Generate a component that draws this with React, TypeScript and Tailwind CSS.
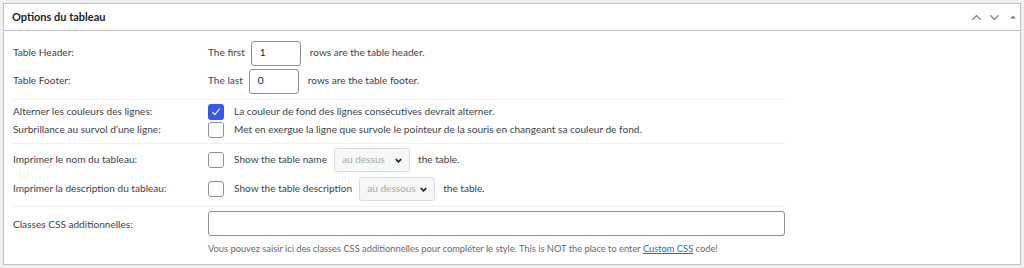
import { ChevronUp, ChevronDown } from 'lucide-react';

const font = { fontFamily: 'Lato, "Liberation Sans", sans-serif' };

function Checkbox({ checked }: { checked?: boolean }) {
  return (
    <span
      className={
        checked
          ? 'flex h-[16px] w-[16px] shrink-0 items-center justify-center rounded-[3px] bg-[#3858e9]'
          : 'flex h-[16px] w-[16px] shrink-0 items-center justify-center rounded-[3px] border border-[#8c8f94] bg-white'
      }
    >
      {checked && (
        <svg viewBox="0 0 16 16" className="h-[12px] w-[12px]">
          <path d="M3.5 8.5 L6.5 11.5 L12.5 4" fill="none" stroke="white" strokeWidth="1.6" strokeLinecap="round" strokeLinejoin="round" />
        </svg>
      )}
    </span>
  );
}

function Select({ value }: { value: string }) {
  return (
    <span className="flex h-[24px] w-[76px] items-center justify-between whitespace-nowrap rounded-[3px] border border-[#dcdcde] bg-[#f6f7f7] pl-[7px] pr-[6px] text-[#a7aaad]">
      <span>{value}</span>
      <svg viewBox="0 0 10 10" className="h-[9px] w-[9px] shrink-0">
        <path d="M2 3.5 L5 6.5 L8 3.5" fill="none" stroke="#1d2327" strokeWidth="1.8" />
      </svg>
    </span>
  );
}

function NumberInput({ value }: { value: string }) {
  return (
    <span className="flex h-[25px] w-[50px] items-center rounded-[3px] border border-[#8c8f94] bg-white pl-[8px] text-[#1d2327]">
      {value}
    </span>
  );
}

export default function App() {
  return (
    <div className="h-[268px] w-[1024px] bg-[#f0f0f1] pl-[3px] pr-[3px] pt-[3px] text-[10.1px] text-[#3c434a]" style={font}>
      <div className="h-[262px] w-[1018px] border border-[#c3c4c7] bg-white">
        <div className="flex h-[27px] items-center justify-between border-b border-[#c3c4c7] pl-[8px] pr-[3px]">
          <h2 className="text-[11px] font-bold text-[#1d2327]">Options du tableau</h2>
          <div className="flex items-center gap-[3px] text-[#787c82]">
            <ChevronUp size={15} strokeWidth={2.2} />
            <ChevronDown size={15} strokeWidth={2.2} />
            <svg viewBox="0 0 10 10" className="ml-[4px] h-[8px] w-[8px]">
              <path d="M1.5 7 L5 3 L8.5 7 Z" fill="#787c82" />
            </svg>
          </div>
        </div>

        <div className="w-[781px] pl-[8px]">
          <div className="border-b border-[#f0f0f1] pb-[4px] pt-[8px]">
            <div className="flex h-[28px] items-center">
              <div className="w-[196px] pl-[1px]">Table Header:</div>
              <div className="flex items-center">
                <span className="mr-[6px]">The first</span>
                <NumberInput value="1" />
                <span className="ml-[9px]">rows are the table header.</span>
              </div>
            </div>
            <div className="flex h-[28px] items-center">
              <div className="w-[196px] pl-[1px]">Table Footer:</div>
              <div className="flex items-center">
                <span className="mr-[6px]">The last</span>
                <NumberInput value="0" />
                <span className="ml-[9px]">rows are the table footer.</span>
              </div>
            </div>
          </div>

          <div className="border-b border-[#f0f0f1] pb-[4px] pt-[3px]">
            <div className="flex h-[18px] items-center">
              <div className="w-[196px] pl-[1px]">Alterner les couleurs des lignes:</div>
              <div className="flex items-center gap-[10px]">
                <Checkbox checked />
                <span>La couleur de fond des lignes consécutives devrait alterner.</span>
              </div>
            </div>
            <div className="flex h-[18px] items-center">
              <div className="w-[196px] pl-[1px]">Surbrillance au survol d’une ligne:</div>
              <div className="flex items-center gap-[10px]">
                <Checkbox />
                <span>Met en exergue la ligne que survole le pointeur de la souris en changeant sa couleur de fond.</span>
              </div>
            </div>
          </div>

          <div className="border-b border-[#f0f0f1] pb-[3px] pt-[2px]">
            <div className="flex h-[28px] items-center">
              <div className="w-[196px] pl-[1px]">Imprimer le nom du tableau:</div>
              <div className="flex items-center">
                <Checkbox />
                <span className="ml-[10px] mr-[7px]">Show the table name</span>
                <Select value="au dessus" />
                <span className="ml-[8px]">the table.</span>
              </div>
            </div>
            <div className="mt-[1px] flex h-[28px] items-center">
              <div className="w-[196px] pl-[1px]">Imprimer la description du tableau:</div>
              <div className="flex items-center">
                <Checkbox />
                <span className="ml-[10px] mr-[7px]">Show the table description</span>
                <Select value="au dessous" />
                <span className="ml-[8px]">the table.</span>
              </div>
            </div>
          </div>

          <div className="flex pt-[4px]">
            <div className="w-[196px] pl-[1px] pt-[6px]">Classes CSS additionnelles:</div>
            <div className="flex-1">
              <div className="h-[25px] w-[577px] rounded-[3px] border border-[#8c8f94] bg-white" />
              <p className="mt-[6px] text-[9.3px] text-[#646970]">
                Vous pouvez saisir ici des classes CSS additionnelles pour compléter le style. This is NOT the place to enter{' '}
                <a className="text-[#2271b1] underline">Custom CSS</a> code!
              </p>
            </div>
          </div>
        </div>
      </div>
    </div>
  );
}
